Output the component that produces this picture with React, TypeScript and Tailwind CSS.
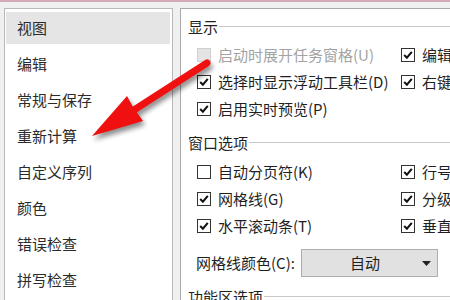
import React from "react"

type BoxProps = { checked?: boolean; disabled?: boolean }

function Box({ checked, disabled }: BoxProps) {
    if (disabled) {
        return <span className="w-[14px] h-[14px] shrink-0 border border-[#cfcfcf] bg-[#e4e4e4]"></span>
    }
    return (
        <span className="w-[14px] h-[14px] shrink-0 border border-[#333333] bg-white flex items-center justify-center">
            {checked && (
                <svg width="10" height="10" viewBox="0 0 10 10">
                    <path d="M1.2 5 L3.9 7.7 L8.8 1.8" stroke="#111" strokeWidth="2" fill="none" />
                </svg>
            )}
        </span>
    )
}

function Option({ label, checked, disabled }: { label: string; checked?: boolean; disabled?: boolean }) {
    return (
        <div className="flex items-center gap-[7px] whitespace-nowrap shrink-0">
            <Box checked={checked} disabled={disabled} />
            <span className={disabled ? "text-[#a3a3a3]" : "text-[#1f1f1f]"}>{label}</span>
        </div>
    )
}

function Header({ title }: { title: string }) {
    return (
        <div className="flex items-center h-[20px] pl-[7px] text-[#1f1f1f] whitespace-nowrap">
            <span>{title}</span>
            <span className="flex-1 h-px bg-[#c8c8c8] ml-[1px] mt-[-2px]"></span>
        </div>
    )
}

function Row({ children }: { children: React.ReactNode }) {
    return <div className="flex items-center h-[27px]">{children}</div>
}

function Left({ children }: { children: React.ReactNode }) {
    return <div className="w-[204px] shrink-0">{children}</div>
}

const menu = ["视图", "编辑", "常规与保存", "重新计算", "自定义序列", "颜色", "错误检查", "拼写检查"]

export default function App() {
    return (
        <div className="relative w-[450px] h-[300px] overflow-hidden bg-[#f0f0f0] text-[15px] leading-[20px] font-['Noto_Sans_CJK_SC','Microsoft_YaHei',sans-serif]">
            <div className="h-[2px] bg-[#d3a9ba]"></div>

            <div className="flex pt-[6px] pl-[4px]">
                {/* Sidebar */}
                <div className="w-[169px] h-[320px] shrink-0 bg-white border border-[#b9b9b9] pt-[3px] pl-[1px] pr-[2px] flex flex-col gap-[4px]">
                    {menu.map((item, i) => (
                        <div
                            key={item}
                            className={`h-[32px] flex items-center pl-[11px] text-[#2b2b2b] ${i === 0 ? "bg-[#e5e5e5]" : ""}`}
                        >
                            {item}
                        </div>
                    ))}
                </div>

                {/* Options panel */}
                <div className="ml-[7px] w-[420px] h-[320px] shrink-0 bg-white border border-[#a9a9a9] pt-[8px] flex flex-col">
                    <Header title="显示" />
                    <div className="mt-[4px] pl-[16px]">
                        <Row>
                            <Left><Option label="启动时展开任务窗格(U)" disabled /></Left>
                            <Option label="编辑栏(F)" checked />
                        </Row>
                        <Row>
                            <Left><Option label="选择时显示浮动工具栏(D)" checked /></Left>
                            <Option label="右键时显示浮动工具栏(R)" checked />
                        </Row>
                        <Row>
                            <Left><Option label="启用实时预览(P)" checked /></Left>
                        </Row>
                    </div>

                    <div className="mt-[11px]"><Header title="窗口选项" /></div>
                    <div className="mt-[5px] pl-[16px]">
                        <Row>
                            <Left><Option label="自动分页符(K)" /></Left>
                            <Option label="行号列标(H)" checked />
                        </Row>
                        <Row>
                            <Left><Option label="网格线(G)" checked /></Left>
                            <Option label="分级显示符号(O)" checked />
                        </Row>
                        <Row>
                            <Left><Option label="水平滚动条(T)" checked /></Left>
                            <Option label="垂直滚动条(V)" checked />
                        </Row>
                    </div>

                    <div className="mt-[10px] pl-[15px] flex items-center h-[28px] whitespace-nowrap">
                        <span className="w-[105px] text-[#1f1f1f]">网格线颜色(C):</span>
                        <div className="w-[137px] h-[28px] bg-[#e1e1e1] border border-[#adadad] flex items-center">
                            <span className="flex-1 text-center pl-[6px] text-[#1f1f1f]">自动</span>
                            <svg width="9" height="5" viewBox="0 0 9 5" className="mr-[6px]">
                                <path d="M0 0 H9 L4.5 5 Z" fill="#222" />
                            </svg>
                        </div>
                    </div>

                    <div className="mt-[10px]"><Header title="功能区选项" /></div>
                </div>
            </div>

            {/* Red annotation arrow */}
            <svg className="absolute inset-0 pointer-events-none" width="450" height="300" viewBox="0 0 450 300">
                <defs>
                    <filter id="shadow" x="-20%" y="-20%" width="140%" height="140%">
                        <feGaussianBlur stdDeviation="2.5" />
                    </filter>
                </defs>
                <g transform="translate(2 4)" opacity="0.45" filter="url(#shadow)">
                    <line x1="134" y1="110" x2="207" y2="63" stroke="#000" strokeWidth="7" strokeLinecap="round" />
                    <polygon points="92,136 127,96 133,107 143,121" fill="#000" />
                </g>
                <line x1="134" y1="110" x2="207" y2="63" stroke="#f01010" strokeWidth="7" strokeLinecap="round" />
                <polygon points="92,136 127,96 133,107 143,121" fill="#f01010" />
            </svg>
        </div>
    )
}
